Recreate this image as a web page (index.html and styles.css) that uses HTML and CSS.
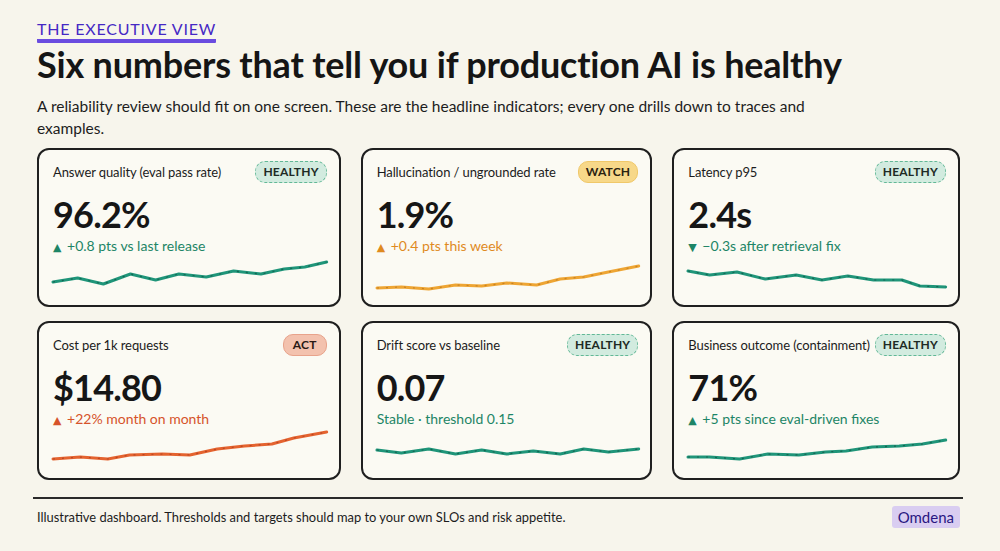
FILE: index.html
```html
<!DOCTYPE html>
<html lang="en">
<head>
<meta charset="utf-8">
<title>The Executive View</title>
<link rel="stylesheet" href="styles.css">
</head>
<body>
<div class="page">
  <header class="intro">
    <div class="eyebrow">THE EXECUTIVE VIEW</div>
    <h1 class="title">Six numbers that tell you if production AI is healthy</h1>
    <p class="lede">A reliability review should fit on one screen. These are the headline indicators; every one drills down to traces and examples.</p>
  </header>

  <main class="grid">
    <section class="card">
      <div class="card-head"><span class="label">Answer quality (eval pass rate)</span><span class="badge badge-healthy">HEALTHY</span></div>
      <div class="value">96.2%</div>
      <div class="delta good"><span class="tri">▲</span> +0.8 pts vs last release</div>
      <svg class="spark spark-green" viewBox="0 0 100 32" preserveAspectRatio="none">
        <polyline class="line" points="0,24 9,20 18.4,26 28.3,16 37.5,22 46,16 56,19 66,13 76,16 84.5,11 92,9 100,4"/>
        <polyline class="grain" points="0,24 9,20 18.4,26 28.3,16 37.5,22 46,16 56,19 66,13 76,16 84.5,11 92,9 100,4"/>
      </svg>
    </section>

    <section class="card">
      <div class="card-head"><span class="label">Hallucination / ungrounded rate</span><span class="badge badge-watch">WATCH</span></div>
      <div class="value">1.9%</div>
      <div class="delta warn"><span class="tri">▲</span> +0.4 pts this week</div>
      <svg class="spark spark-amber" viewBox="0 0 100 32" preserveAspectRatio="none">
        <polyline class="line" points="0,30 9.3,29 19.8,31 30,27 40,28 49.6,25 61,27 70,21 79,19 88.4,14 100,8"/>
        <polyline class="grain" points="0,30 9.3,29 19.8,31 30,27 40,28 49.6,25 61,27 70,21 79,19 88.4,14 100,8"/>
      </svg>
    </section>

    <section class="card">
      <div class="card-head"><span class="label">Latency p95</span><span class="badge badge-healthy">HEALTHY</span></div>
      <div class="value">2.4s</div>
      <div class="delta good"><span class="tri">▼</span> −0.3s after retrieval fix</div>
      <svg class="spark spark-green" viewBox="0 0 100 32" preserveAspectRatio="none">
        <polyline class="line" points="0,13 8.4,17 19,14 30,21 42,17 52,22 62,18 72,22 83,22 90,28 100,29"/>
        <polyline class="grain" points="0,13 8.4,17 19,14 30,21 42,17 52,22 62,18 72,22 83,22 90,28 100,29"/>
      </svg>
    </section>

    <section class="card">
      <div class="card-head"><span class="label">Cost per 1k requests</span><span class="badge badge-act">ACT</span></div>
      <div class="value">$14.80</div>
      <div class="delta bad"><span class="tri">▲</span> +22% month on month</div>
      <svg class="spark spark-red" viewBox="0 0 100 32" preserveAspectRatio="none">
        <polyline class="line" points="0,28 10,26 20,28 28,24 40,23 50,24 60,18 70,15 80,13 88,7 100,1"/>
        <polyline class="grain" points="0,28 10,26 20,28 28,24 40,23 50,24 60,18 70,15 80,13 88,7 100,1"/>
      </svg>
    </section>

    <section class="card">
      <div class="card-head"><span class="label">Drift score vs baseline</span><span class="badge badge-healthy">HEALTHY</span></div>
      <div class="value">0.07</div>
      <div class="delta good">Stable · threshold 0.15</div>
      <svg class="spark spark-green" viewBox="0 0 100 32" preserveAspectRatio="none">
        <polyline class="line" points="0,21 9.3,24 19.8,20 30,25 40,21 49.6,25 59.7,22 70,25 79,20 88.4,23 100,20"/>
        <polyline class="grain" points="0,21 9.3,24 19.8,20 30,25 40,21 49.6,25 59.7,22 70,25 79,20 88.4,23 100,20"/>
      </svg>
    </section>

    <section class="card">
      <div class="card-head"><span class="label">Business outcome (containment)</span><span class="badge badge-healthy">HEALTHY</span></div>
      <div class="value">71%</div>
      <div class="delta good"><span class="tri">▲</span> +5 pts since eval-driven fixes</div>
      <svg class="spark spark-green" viewBox="0 0 100 32" preserveAspectRatio="none">
        <polyline class="line" points="0,26 8.3,26 20,28 31,23 43,24 53.4,21 61.3,20 71.5,16 82,15 91,13 100,9"/>
        <polyline class="grain" points="0,26 8.3,26 20,28 31,23 43,24 53.4,21 61.3,20 71.5,16 82,15 91,13 100,9"/>
      </svg>
    </section>
  </main>

  <footer class="foot">
    <span class="note">Illustrative dashboard. Thresholds and targets should map to your own SLOs and risk appetite.</span>
    <span class="brand">Omdena</span>
  </footer>
</div>
</body>
</html>
```

FILE: styles.css
```css
* { box-sizing: border-box; }

html, body {
  margin: 0;
  padding: 0;
  background: #f7f5ec;
}

body {
  font-family: Lato, "Open Sans", "DejaVu Sans", sans-serif;
  color: #1b1b1b;
}

.page {
  width: 1000px;
  height: 551px;
  padding: 19px 40px 0 37px;
}

.eyebrow {
  display: inline-block;
  font-size: 16px;
  line-height: 18px;
  letter-spacing: 0.8px;
  color: #4528c4;
  padding-bottom: 1px;
  border-bottom: 4px solid #6a4ce0;
  border-radius: 1px;
}

.title {
  margin: 1px 0 0 0;
  font-size: 36px;
  line-height: 40px;
  font-weight: 700;
  letter-spacing: -0.2px;
  color: #151515;
}

.lede {
  margin: 11px 0 0 0;
  font-size: 15.5px;
  line-height: 22px;
  color: #1d1d1d;
  max-width: 790px;
}

.grid {
  margin-top: 9px;
  display: grid;
  grid-template-columns: 304fr 292fr 288fr;
  column-gap: 20px;
  row-gap: 14px;
}

.card {
  height: 159px;
  min-width: 0;
  border: 2px solid #1f1f1f;
  border-radius: 12px;
  background: #fbfaf3;
  padding: 10px 12px 0 14px;
  display: flex;
  flex-direction: column;
}

.card-head {
  display: flex;
  justify-content: space-between;
  align-items: center;
  height: 23px;
}

.label {
  font-size: 13px;
  letter-spacing: -0.1px;
  color: #1c1c1c;
  white-space: nowrap;
}

.badge {
  font-size: 12px;
  font-weight: 700;
  line-height: 18px;
  padding: 1px 7px;
  border-radius: 10px;
  color: #1e2a24;
  letter-spacing: 0.2px;
}

.badge-healthy {
  background: #d2ebdf;
  border: 1.5px dashed #62b896;
}

.badge-watch {
  background: #f7d889;
  border: 1.5px solid #f0c869;
  color: #2a2210;
}

.badge-act {
  background: #f3c2ae;
  border: 1.5px solid #e8a38b;
  color: #2a1a14;
  padding: 1px 9px;
}

.value {
  margin-top: 11px;
  font-size: 36px;
  line-height: 40px;
  font-weight: 700;
  letter-spacing: -0.8px;
  color: #161616;
}

.delta {
  margin-top: 3px;
  font-size: 14px;
  line-height: 18px;
  white-space: nowrap;
}

.tri {
  font-family: "DejaVu Sans", sans-serif;
  font-size: 11px;
  margin-right: 2px;
}

.good { color: #1d8566; }
.warn { color: #df8a1f; }
.bad  { color: #d6532a; }

.spark {
  display: block;
  width: 100%;
  height: 32px;
  margin-top: 1px;
  overflow: visible;
}

.spark .line {
  fill: none;
  stroke-width: 3;
  stroke-linejoin: round;
  stroke-linecap: round;
  vector-effect: non-scaling-stroke;
}

.spark .grain {
  fill: none;
  stroke-width: 1.2;
  stroke-dasharray: 2 7;
  stroke-linejoin: round;
  vector-effect: non-scaling-stroke;
  opacity: 0.55;
}

.spark-green .line { stroke: #1f9579; }
.spark-green .grain { stroke: #0e3d33; }
.spark-amber .line { stroke: #eea533; }
.spark-amber .grain { stroke: #a8651a; }
.spark-red .line { stroke: #e4632f; }
.spark-red .grain { stroke: #9a2e18; }

.foot {
  margin-top: 17px;
  margin-left: -4px;
  margin-right: -3px;
  border-top: 2px solid #2a2a2a;
  padding: 7px 3px 0 4px;
  display: flex;
  justify-content: space-between;
  align-items: center;
}

.note {
  font-size: 12.9px;
  color: #1c1c1c;
}

.brand {
  font-size: 15px;
  line-height: 20px;
  color: #2a1782;
  background: #d9cdf1;
  padding: 1px 6px;
  border-radius: 3px;
}
```
